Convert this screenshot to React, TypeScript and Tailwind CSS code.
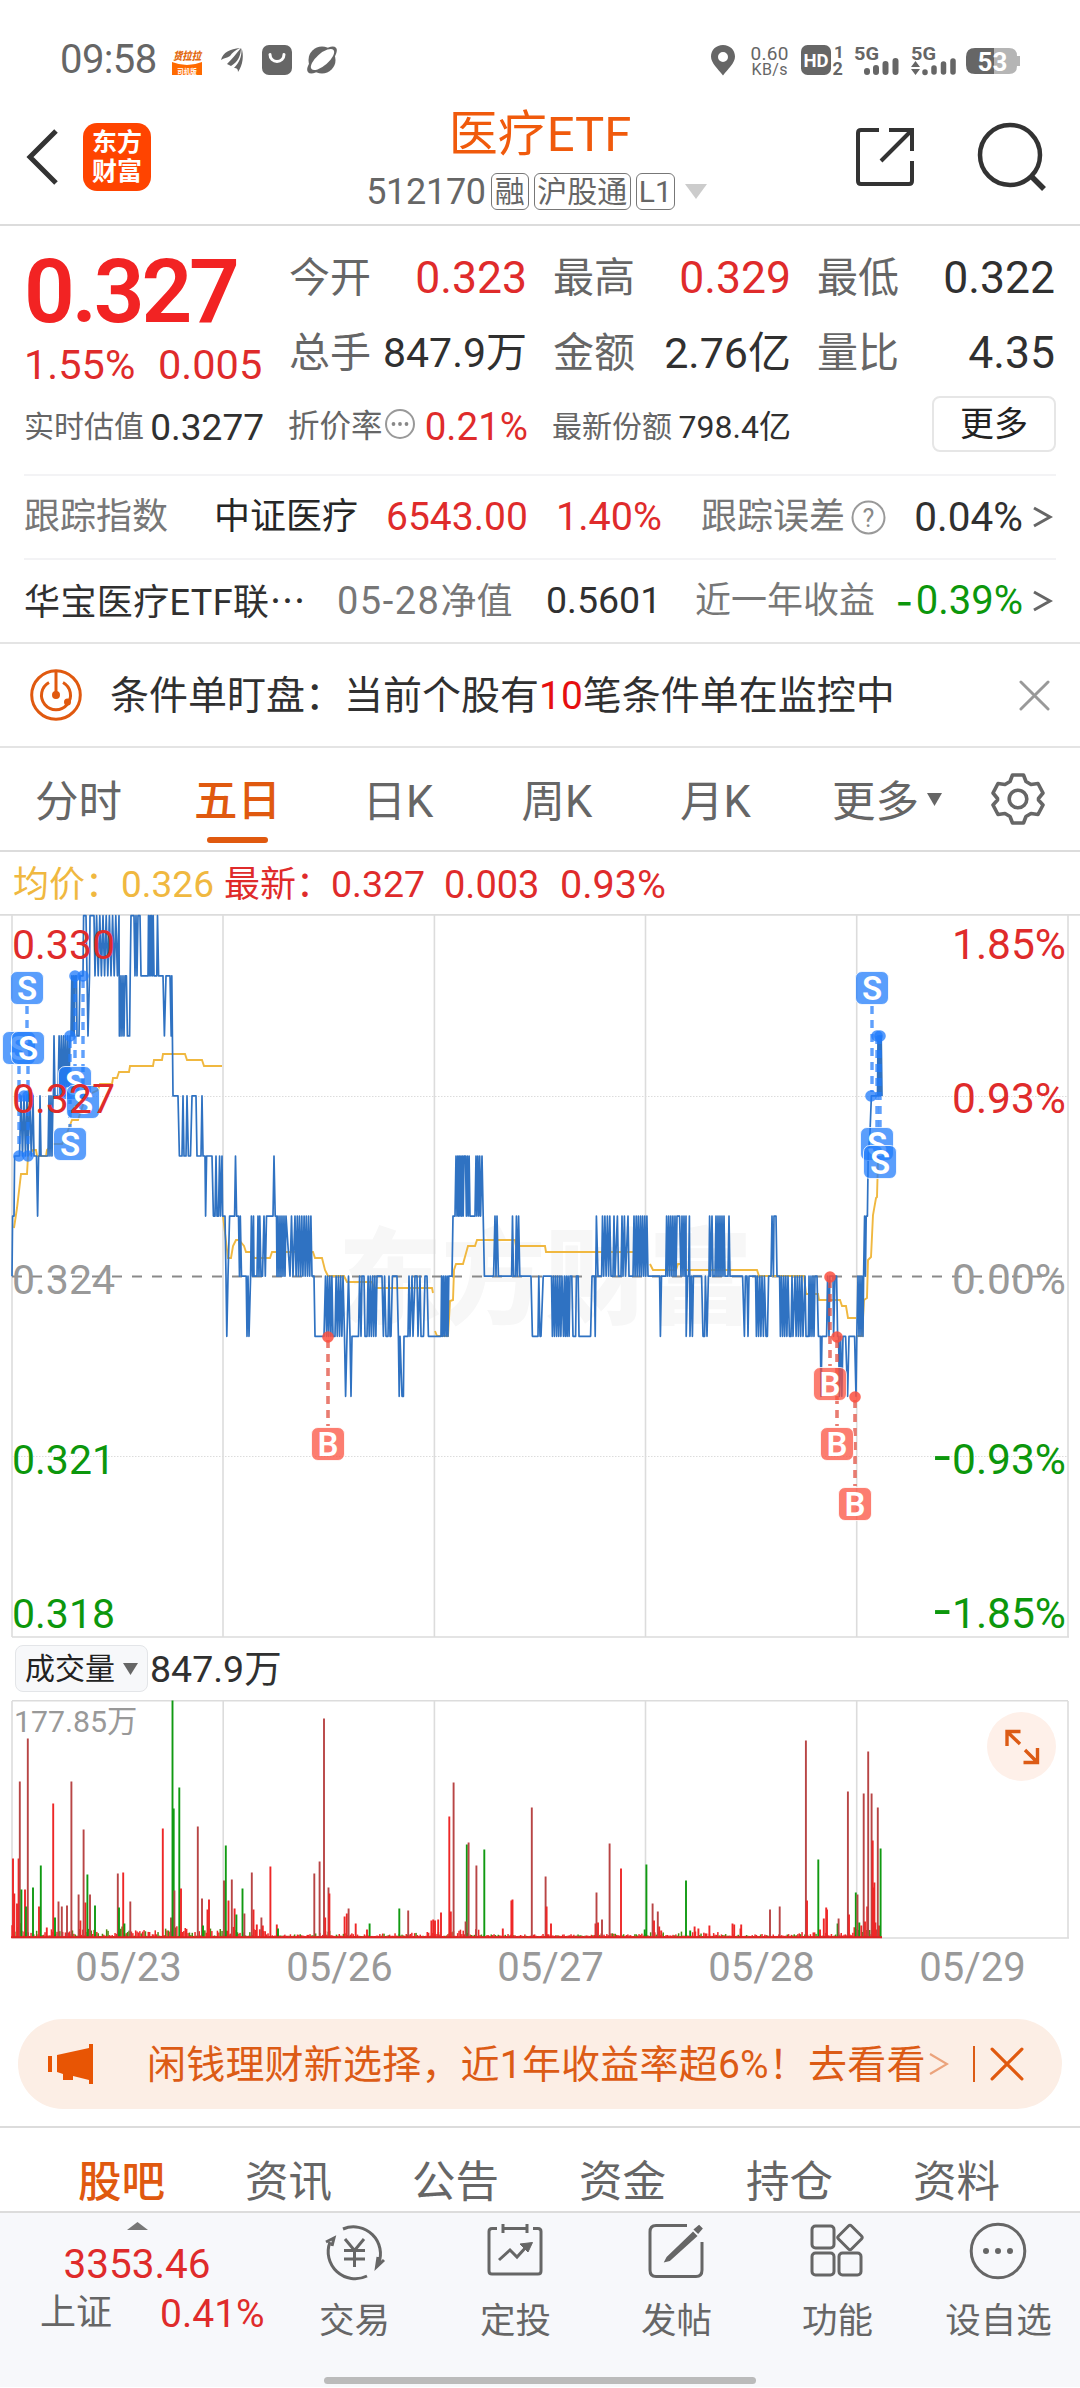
import React from "react";

/* ---------- chart geometry ---------- */

const TOP = 914;
const levelY = (l: number) => 915.7 + l * 60.08 - TOP;

type Step = [number, number] | [number, number, number, number, number];

// [x, level] is a vertex; [x0, x1, a, b, n] swings between two levels n times.
const PRICE: Step[] = [
  [12, 6], [12.6, 5], [14, 5], [14.6, 4], [19, 4], [19.5, 27, 4, 3, 3], [28, 33, 4, 3, 2], [34, 4], [36.5, 4], [37.6, 5], [38.6, 4], [39.4, 4], [40, 3], [41, 4],
  [47.5, 4], [48, 53, 4, 3, 3], [53.4, 3], [54, 2], [55, 3], [57.5, 3], [58, 70, 3, 2, 6], [70.5, 2], [71, 75, 2, 1, 3], [76.5, 1], [77, 2], [79, 2], [80, 1], [83, 1], [83.6, 0], [86, 0],
  [87, 1], [88, 2], [89.5, 1], [90, 0], [94, 0], [95, 119, 1, 0, 8], [119.4, 2], [120, 125, 2, 1, 3], [126.4, 1], [127.4, 2], [129.6, 2], [130.2, 1], [131, 0], [134, 0], [135, 138, 1, 0, 2], [140, 0], [141, 1], [148, 1],
  [148.5, 154, 0, 1, 4], [156.8, 1], [157.5, 0], [158.6, 1], [163, 1], [164.4, 2], [166, 1], [170, 1], [171.2, 2], [171.8, 1], [173, 3], [178, 3], [179.4, 4], [182, 4], [183, 3], [184, 4], [186, 4], [187, 3], [188.4, 4], [190.5, 4], [192, 3], [196, 3],
  [197, 4], [201, 4], [202, 3], [203, 4], [205, 4], [205.6, 5], [206.6, 4], [212, 4], [213.4, 5], [215, 5], [216, 4], [217, 5], [218.4, 5], [219.6, 4], [220.4, 5], [222, 4], [222.6, 5],
  [225, 5], [226, 6], [226.8, 7], [228, 6], [229.6, 5], [234.6, 5], [235.5, 4], [236.6, 5], [238.5, 5], [239.5, 6], [240.3, 5], [241.5, 6], [246.2, 6], [247, 7], [248, 6], [249, 7], [250.6, 6], [251.4, 5], [252.5, 6], [253.5, 5], [254, 6], [257, 6], [258, 5], [259, 6], [259.8, 5], [261, 6], [262.5, 6], [264, 5], [265.3, 6], [266.5, 5],
  [273, 5], [274, 4], [275.2, 5], [276.5, 5], [277, 286, 6, 5, 5], [290, 6], [291.5, 5], [293, 6], [295, 312, 5, 6, 8], [314, 6], [315, 7], [316.6, 7],
  [324, 7], [325.5, 333, 6, 7, 4], [335, 343, 7, 6, 4], [344.5, 7], [345.6, 8], [347, 7], [348.5, 6], [350, 7], [351, 8], [352, 7], [358.5, 7], [359.6, 6], [361, 7], [362, 6], [364, 6], [365, 7], [367, 377, 7, 6, 5], [382, 6], [383.4, 7], [384.6, 6], [386, 7], [388, 7], [389, 6], [390, 7], [391, 7], [392.4, 6], [397, 6], [398.4, 7],
  [399.2, 8], [400, 7], [402, 8], [403.4, 8], [404, 7], [408, 7], [409, 6], [410, 7], [412, 6], [413, 7], [415, 6], [417, 6], [418, 7], [420, 6], [421, 7], [423.5, 7], [425, 6], [427, 6], [428.4, 7],
  [441, 7], [441.6, 448, 6, 7, 4], [448.8, 6], [452, 6], [453, 5], [455, 5], [456, 4], [457, 464, 5, 4, 5], [465.5, 470, 4, 5, 3], [475, 5], [476, 480.6, 4, 5, 3], [482, 4], [483.2, 5], [484.4, 6], [493.6, 6], [495, 5], [496, 6], [497, 5], [498.4, 6], [511.6, 6], [512.5, 5], [513.5, 6], [515.5, 6], [516.4, 5], [517.4, 6], [518.6, 5], [519.8, 6],
  [531, 6], [532.4, 7], [538, 7], [538.8, 6], [540, 7], [541, 7], [543.2, 6], [551.5, 6], [552.4, 562, 7, 6, 5], [563.5, 570, 7, 6, 4], [571.8, 6], [573, 7], [575.6, 7], [576.4, 6], [578.2, 6], [579, 7], [590.6, 7], [592, 6], [594.4, 6], [595.2, 7], [595.8, 6], [596.4, 5], [598, 6],
  [601.6, 6], [602.5, 611, 5, 6, 4], [613, 6], [614, 5], [615, 6], [617.4, 5], [618.5, 6], [621, 6], [622, 5], [623, 6], [624.4, 5], [625.5, 6], [628, 5], [629, 6], [633, 6], [634, 648, 5, 6, 7],
  [659.6, 6], [660.4, 7], [661.5, 6], [665.8, 6], [666.6, 674, 5, 6, 4], [675, 5], [676, 6], [677, 5], [679.6, 5], [681, 686, 6, 5, 3], [686.2, 7], [687.6, 6], [688.6, 6], [689.4, 5], [690, 7], [691.4, 6], [692.4, 7], [693.4, 6], [701.6, 6], [703, 7], [704.6, 7], [705.4, 6], [707, 7], [708.4, 6], [709, 6], [709.6, 5], [710.6, 6], [712, 5], [713, 6],
  [715, 6], [716, 725, 5, 6, 5], [728, 6], [729, 5], [730, 6], [742.6, 6], [744.4, 7], [745.4, 6], [747, 6], [748, 7], [749, 6], [755.6, 6], [756.4, 762, 7, 6, 3], [763.4, 7], [764.4, 6], [766, 7], [767.4, 7], [768.6, 6], [771, 6], [772, 5], [773.4, 6], [774, 5], [776, 5], [777, 6], [779.6, 6],
  [780.4, 788, 7, 6, 4], [789.4, 7], [791, 7], [792, 6], [793, 7], [795, 803, 6, 7, 4], [805, 6], [806, 7], [808.4, 7], [809, 814, 6, 7, 3], [815, 6], [817, 6], [818.4, 7], [820.4, 7], [821, 8], [822, 7], [826.6, 7], [827.6, 6], [829, 7], [829.8, 6], [833, 6], [833.6, 7], [835, 6], [836.6, 6], [837.6, 7],
  [838.6, 7], [839.4, 843, 8, 7, 2], [844.6, 7], [845.6, 7], [847.6, 8], [849, 7], [854.6, 7], [856, 8], [856.8, 7], [858, 863, 6, 7, 3], [863.6, 6], [864.6, 5], [865.4, 6], [866.2, 5], [867.4, 5], [868.2, 4], [870, 3.6], [871.4, 3], [877.5, 3], [878, 882, 2, 3, 3],
];

const pricePoints = PRICE.flatMap((s): string[] => {
  if (s.length === 2) return [`${s[0]},${levelY(s[1]).toFixed(1)}`];
  const [x0, x1, a, b, n] = s;
  const d = (x1 - x0) / (n * 2 - 1);
  return Array.from({ length: n * 2 }, (_, i) => `${(x0 + i * d).toFixed(1)},${levelY(i % 2 ? b : a).toFixed(1)}`);
}).join(" ");

const AVERAGE = [
  "14,1228 17,1208 21,1174 27,1174 28,1156 33,1150 36,1150 37,1156 46,1156 47,1150 53,1144 62,1144 65,1138 72,1120 78,1120 84,1102 90,1094 98,1090 100,1084 112,1084 113,1078 117,1078 119,1072 129,1072 130,1066 153,1066 154,1060 162,1060 163,1054 185,1054 187,1060 202,1060 204,1066 222,1066",
  "223,1216 228,1258 231,1258 233,1246 236,1240 239,1240 244,1246 246,1252 251,1252 254,1258 270,1258 272,1252 313,1252 315,1258 322,1258 325,1270 328,1276 344,1276 347,1282 372,1282 374,1288 432,1288 433,1293",
  "435,1331 437,1336 448,1336 450,1301 453,1300 454,1270 456,1264 463,1264 468,1246 475,1246 477,1240 515,1240 516,1246 545,1246 546,1252 636,1252 645,1256",
  "650,1264 653,1270 676,1270 678,1264 683,1264 685,1270 757,1270 759,1276 804,1276 806,1294 818,1294 819,1300 840,1300 842,1306 846,1306 848,1318 856,1318",
  "857,1336 862,1336 864,1300 867,1298 868,1260 871,1257 873,1215 876,1198 877,1197 878,1160 880,1150",
];

const TRADES = {
  sellDots: [[75, 976], [83, 976], [70, 1036], [19, 1156], [28, 1156], [24, 1096], [28, 1096], [871, 1096], [877, 1036], [880, 1036]],
  sellLines: [[27, 1006, 1030], [19, 1066, 1150], [28, 1066, 1150], [75, 980, 1066], [83, 980, 1086], [70, 1040, 1128], [872, 1006, 1092], [877, 1036, 1128], [880, 1036, 1128]],
  sells: [[27, 988], [19, 1048], [28, 1048], [75, 1083], [83, 1102], [70, 1144], [872, 988], [877, 1144], [880, 1162]],
  buyDots: [[328, 1337], [830, 1277], [837, 1337], [855, 1397]],
  buyLines: [[328, 1340, 1426], [830, 1280, 1366], [837, 1340, 1426], [855, 1400, 1486]],
  buys: [[328, 1444], [830, 1384], [837, 1444], [855, 1504]],
};

function Tag({ x, y, label, color }: { x: number; y: number; label: string; color: string }) {
  return (
    <g>
      <rect x={x - 16.5} y={y - TOP - 16.5} width="33" height="33" rx="6.5" fill={color} fillOpacity=".74" stroke="#fff" strokeWidth=".8" />
      <text x={x} y={y - TOP + 11.8} textAnchor="middle" fontSize="33" fontWeight="600" fill="#fff">{label}</text>
    </g>
  );
}

const AXIS: [string, string, number, string][] = [
  ["0.330", "1.85%", 959, "#df2b2b"],
  ["0.327", "0.93%", 1113, "#df2b2b"],
  ["0.324", "0.00%", 1294, "#999999"],
  ["0.321", "-0.93%", 1474, "#0c970c"],
  ["0.318", "-1.85%", 1628, "#0c970c"],
];

function PriceChart() {
  const S = "#217cfb";
  const B = "#fb4f3e";
  return (
    <svg className="block w-[1080px] h-[726px] overflow-visible" viewBox="0 0 1080 726" fontFamily='Roboto, "Noto Sans CJK SC", sans-serif'>
      <text x="338" y="402" fontSize="104" fontWeight="900" fill="#f7f7f7" letterSpacing="-.5">东方财富</text>
      <g stroke="#dcdcdc" strokeWidth="1.6">
        <path d="M0 .9H1080M12 723H1069" />
        <path d="M12 1V723M223 1V723M434.4 1V723M645.5 1V723M856.7 1V723M1068 1V723" />
        <path d="M12 182.5H1068M12 542.5H1068" strokeDasharray="1.5 1.5" strokeWidth="1" />
      </g>
      <path d="M12 362.5H1066" stroke="#8a8a8a" strokeWidth="1.8" strokeDasharray="10 10" />
      <g transform={`translate(0 ${-TOP})`} fill="none" stroke="#f0b840" strokeWidth="1.9">
        {AVERAGE.map((p) => <polyline key={p} points={p} />)}
      </g>
      <polyline points={pricePoints} fill="none" stroke="#2f72c2" strokeWidth="1.7" strokeLinejoin="round" />
      <g stroke={S} strokeOpacity=".72" strokeWidth="3.4" strokeDasharray="8 6">
        {TRADES.sellLines.map(([x, a, b], i) => <path key={i} d={`M${x} ${a - TOP}V${b - TOP}`} />)}
      </g>
      <g stroke="#e04a3a" strokeOpacity=".72" strokeWidth="3.6" strokeDasharray="8 6">
        {TRADES.buyLines.map(([x, a, b], i) => <path key={i} d={`M${x} ${a - TOP}V${b - TOP}`} />)}
      </g>
      {TRADES.sellDots.map(([x, y], i) => <circle key={i} cx={x} cy={y - TOP} r="5.8" fill={S} fillOpacity=".76" />)}
      {TRADES.buyDots.map(([x, y], i) => <circle key={i} cx={x} cy={y - TOP} r="5.8" fill={B} fillOpacity=".85" />)}
      {TRADES.sells.map(([x, y], i) => <Tag key={i} x={x} y={y} label="S" color={S} />)}
      {TRADES.buys.map(([x, y], i) => <Tag key={i} x={x} y={y} label="B" color={B} />)}
      {AXIS.map(([l, r, y, c]) => (
        <g key={l} fontSize="41" fill={c}>
          <text x="12" y={y - TOP}>{l}</text>
          <text x="1066" y={y - TOP} fontSize="42.5" textAnchor="end">
            {r.startsWith("-") && <tspan fontFamily='"Noto Sans CJK SC"' fontSize="56">-</tspan>}
            {r.replace("-", "")}
          </text>
        </g>
      ))}
    </svg>
  );
}

// x, bar height, colour key: r red, d dark red, g green
const BARS_RAW =
  "13 79 r,14.3 44 r,17 34 r,18.6 79 r,19.8 156 d,21.4 48 g,25 48 r,26 31 g,27.8 199 d,33 50 g,39 31 r,40.8 72 g,46.8 10 r,53.2 134 r,55 20 g,58.5 36 d,61.8 31 d,67 32 d,71.4 156 d,78.6 43 d,80.4 17 r,83.6 108 d,85.4 35 r,87.4 63 g,90 43 d,95 32 g,117.8 64 d,119 30 g,123.2 65 r,124.4 14 g,130.3 36 d,162.8 109 r,171 20 d,172.5 237 g,173.7 129 g,174.4 47 d,179.3 150 g,181 49 r,197.8 111 d,202 39 d,203 12 g,207.5 28 r,209 38 r,224 57 d,225.8 92 g,228.5 37 r,231.8 58 d,234.6 29 r,236.4 23 g,242.5 49 g,244.4 24 d,251.8 65 d,253.5 28 r,256.8 13 r,261.4 20 d,262.8 12 r,270.4 71 r,276.8 13 r,278 9 g,314.3 64 d,319.6 76 d,324 219 d,325.2 20 r,328.5 50 d,329.4 44 r,344.6 21 r,346.8 24 r,348.6 29 d,355.7 14 r,369.6 14 g,367 8 r,399.3 29 g,408.2 27 d,431.4 17 r,433.2 18 r,435 17 r,438.2 18 r,441 25 r,449.3 121 r,450.8 26 r,453.6 155 d,466.8 93 g,468.6 95 d,465.6 16 d,476.4 72 d,484.3 88 g,502.8 9 r,511.4 37 r,512.5 38 r,531.8 130 d,545.6 61 d,546.6 31 r,551 14 r,595.5 14 r,596.5 45 d,598 15 r,602 18 d,609.6 94 d,621 69 r,644.7 8 g,646.4 73 g,652.6 34 d,654 17 r,657.8 26 d,659.2 11 r,661.2 7 r,686 57 g,690.2 7 g,694.6 11 r,698.4 9 r,709.4 12 r,732.5 14 r,734.2 13 r,740.5 9 r,741.2 13 r,770 28 d,779.7 31 d,805.9 197 d,807 37 r,818.3 78 g,820 8 r,823.8 19 r,826.2 30 r,827 28 r,837.6 14 g,838.6 19 d,847.9 146 d,849 23 r,855.8 45 g,857.5 43 d,859.3 15 g,861.3 12 r,863.7 144 d,865 16 r,867.2 31 r,868.2 186 d,871.6 144 d,872.7 97 r,873.7 50 r,874.4 55 r,875.4 15 r,876.8 8 r,877.8 130 d,879 12 r,880.6 89 g";
const COLORS: Record<string, string> = { r: "#ee2727", d: "#b84545", g: "#109a12" };
const BARS = BARS_RAW.split(",").map((s) => {
  const [x, h, c] = s.split(" ");
  return { x: +x, h: +h, fill: COLORS[c] };
});

// Low-volume minutes along the baseline; `amp` is the usual height in each stretch.
const QUIET: [number, number, number][] = [
  [12, 24, 16], [24, 50, 6], [50, 80, 7], [80, 130, 10], [130, 160, 7], [160, 222, 10], [222, 240, 10], [240, 275, 7], [275, 310, 2], [310, 335, 6],
  [335, 395, 3], [395, 430, 4], [430, 445, 5], [445, 480, 7], [480, 590, 2], [590, 645, 3], [645, 720, 5], [720, 795, 2], [795, 850, 4], [850, 882, 10],
];
const FLOOR = QUIET.flatMap(([a, b, amp]) =>
  Array.from({ length: Math.ceil((b - a) / 1.4) }, (_, i) => {
    const x = a + i * 1.4;
    const n = Math.abs(Math.sin(x * 12.9898) * 43758.5453) % 1;
    const m = Math.abs(Math.sin(x * 78.233) * 9631.17) % 1;
    return { x, h: 1.5 + n * n * amp, fill: m > 0.72 ? "#4d8a10" : "#ee2727" };
  }),
);

function VolumeChart() {
  return (
    <svg className="block w-[1080px] h-[240px]" viewBox="0 0 1080 240" fontFamily='Roboto, "Noto Sans CJK SC", sans-serif'>
      <g stroke="#dcdcdc" strokeWidth="1.6">
        <path d="M12 .8H1068M12 238H1069" />
        <path d="M12 1V238M223.2 1V238M434.4 1V238M645.5 1V238M856.7 1V238M1068 1V238" />
      </g>
      <text x="14" y="32" fontSize="30.3" fill="#999">177.85万</text>
      {FLOOR.map((b, i) => <rect key={i} x={b.x - 0.7} y={237.5 - b.h} width="1.5" height={b.h} fill={b.fill} />)}
      {BARS.map((b, i) => <rect key={i} x={b.x - 0.95} y={237.5 - b.h} width="1.9" height={b.h} fill={b.fill} />)}
      <path d="M11 237.3H882" stroke="#d22" strokeWidth="2" />
    </svg>
  );
}

/* ---------- small pieces ---------- */

function Chevron() {
  return (
    <svg className="w-[20px] h-[24px]" viewBox="0 0 20 24" fill="none" stroke="#666" strokeWidth="3"><path d="M1 3L17 12L1 21" /></svg>
  );
}

function Cross({ className, color, width }: { className: string; color: string; width: number }) {
  return (
    <svg className={className} viewBox="0 0 32 32" fill="none" stroke={color} strokeWidth={width} strokeLinecap="round"><path d="M2 2L30 30M30 2L2 30" /></svg>
  );
}

function Stat({ label, value, color = "text-[#303030]", size = "text-[44.5px]" }: { label: string; value: string; color?: string; size?: string }) {
  return (
    <div className="flex items-center justify-between h-[75px]">
      <span className="text-[41px] pt-[2px] text-[#666]">{label}</span>
      <span className={`${size} pt-[1px] ${color}`}>{value}</span>
    </div>
  );
}

const RED = "text-[#df2b2b]";

function StatusBar() {
  return (
    <div className="flex items-center h-[90px] pt-[30px] pl-[60px] pr-[59px] text-[#666]">
      <span className="text-[40px] w-[112px] tracking-[-0.6px]">09:58</span>
      <svg className="w-[170px] h-[30px] overflow-visible" viewBox="0 0 170 30">
        <text x="1" y="15" fontSize="11" fontWeight="900" fontStyle="italic" fill="#e36a10" textLength="28" lengthAdjust="spacingAndGlyphs">货拉拉</text>
        <path d="M0 17Q15 23 30 17V30H0Z" fill="#ff6a00" />
        <text x="15" y="28.5" fontSize="6.5" fontWeight="700" fill="#fff" textAnchor="middle">司机版</text>
        <g fill="#666">
          <path d="M49 15C51 7 58 4 68 3C63 5 60 8 58 11C55 13 52 13 49 15ZM55 19C60 14 64 9 69 3C69 10 66 17 59 21ZM62 23C67 18 70 12 69.500 3C72 10 71 20 66 27C66 24 65 23 62 23Z" />
          <rect x="90" width="30" height="30" rx="7" />
          <ellipse cx="150" cy="15" rx="18.500" ry="7.500" transform="rotate(-41 150 15)" />
          <circle cx="150" cy="15" r="13.500" />
        </g>
        <path d="M98 9.500A7 7 0 0 0 112 9.500" fill="none" stroke="#fff" strokeWidth="3" strokeLinecap="round" />
        <ellipse cx="150.500" cy="14.500" rx="14.500" ry="6" transform="rotate(-41 150.500 14.500)" fill="#fff" />
      </svg>
      <svg className="ml-auto w-[312px] h-[32px] overflow-visible" viewBox="709 43 312 32" fill="#666">
        <path fillRule="evenodd" d="M723 44C716 44 711 49 711 55.500C711 62 718 68 723 74.500C728 68 735 62 735 55.500C735 49 730 44 723 44ZM723 51A5 5 0 1 1 723 61A5 5 0 1 1 723 51Z" />
        <text x="750.500" y="59" fontSize="19" textLength="38">0.60</text>
        <text x="751.500" y="74" fontSize="16" textLength="36">KB/s</text>
        <rect x="801" y="44" width="30" height="30" rx="6.500" />
        <text x="816" y="65.500" fontSize="18.500" fontWeight="700" fill="#fff" textAnchor="middle">HD</text>
        <text x="834" y="57" fontSize="17" fontWeight="700">1</text>
        <text x="832.500" y="74" fontSize="18" fontWeight="700">2</text>
        <text x="854" y="59" fontSize="19" fontWeight="700" textLength="25" lengthAdjust="spacingAndGlyphs">5G</text>
        <path d="M867 70V71M876 67V71M885.500 63V71M895.500 60V71" stroke="#666" strokeWidth="6" strokeLinecap="round" />
        <text x="911" y="59" fontSize="19" fontWeight="700" textLength="25" lengthAdjust="spacingAndGlyphs">5G</text>
        <path d="M915.500 60L920 66H911ZM915.500 74L920 68H911Z" />
        <path d="M925 71V71.500M934 67V71M943.500 63V71M953 60V71" stroke="#666" strokeWidth="5.500" strokeLinecap="round" />
        <path d="M975 47H1009Q1017 47 1017 55H1020V65H1017Q1017 73 1009 73H975Z" fill="#b5b5b5" />
        <path d="M994 47H975Q966 47 966 56V64Q966 73 975 73H994Z" />
        <text x="992.500" y="69.500" fontSize="26" fontWeight="700" fill="#fff" textAnchor="middle">53</text>
      </svg>
    </div>
  );
}

function Header() {
  return (
    <div className="flex items-center justify-between h-[136px] pl-[26px] pr-[33px] border-b-2 border-[#dcdcdc]">
      <div className="flex items-center w-[300px]">
        <svg className="w-[34px] h-[56px]" viewBox="0 0 34 56" fill="none" stroke="#333" strokeWidth="5"><path d="M30 2L4 28L30 54" /></svg>
        <div className="ml-[23px] w-[68px] h-[68px] rounded-[14px] bg-[#ff4400] flex flex-col items-center justify-center text-white font-bold text-[25px] leading-[29px]">
          <span>东方</span>
          <span>财富</span>
        </div>
      </div>
      <div className="flex flex-col items-center -ml-[16px]">
        <div className="text-[49px] text-[#f05a0c] h-[60px] flex items-center mt-[6px] pl-[7px]">医疗ETF</div>
        <div className="flex items-center text-[#666] h-[48px] mt-[3px] text-[36px]">
          <span className="tracking-[-0.3px]">512170</span>
          <span className="ml-[5px] border-[1.5px] border-[#777] rounded-[6px] h-[37px] w-[38px] flex items-center justify-center text-[30px]">融</span>
          <span className="ml-[5px] border-[1.5px] border-[#777] rounded-[6px] h-[37px] w-[97px] flex items-center justify-center text-[30px]">沪股通</span>
          <span className="ml-[5px] border-[1.5px] border-[#777] rounded-[6px] h-[37px] w-[39px] flex items-center justify-center text-[30px]">L1</span>
          <svg className="ml-[10px] w-[22px] h-[15px]" viewBox="0 0 22 15"><path d="M0 0H22L11 15Z" fill="#ccc" /></svg>
        </div>
      </div>
      <div className="flex items-center justify-end w-[284px]">
        <svg className="w-[60px] h-[60px]" viewBox="0 0 60 60" fill="none" stroke="#333" strokeWidth="4">
          <path d="M24 3H6Q3 3 3 6V54Q3 57 6 57H54Q57 57 57 54V34M34 3H57V24M57 3L26 34" />
        </svg>
        <svg className="ml-[62px] w-[70px] h-[70px]" viewBox="0 0 70 70" fill="none" stroke="#333" strokeWidth="4.500">
          <circle cx="33" cy="33" r="30" /><path d="M54 54L67 67" strokeWidth="5.500" />
        </svg>
      </div>
    </div>
  );
}

function Quote() {
  return (
    <div className="pt-[14px] h-[248px]">
      <div className="flex h-[150px] pl-[24px] pr-[25px]">
        <div className="w-[265px]">
          <div className="h-[98px] pt-[5px] flex items-center text-[89px] font-semibold text-[#f22323] tracking-[-3.2px]">0.327</div>
          <div className={`h-[52px] pt-[2px] flex items-center text-[41.500px] ${RED}`}>
            <span className="w-[134px]">1.55%</span>
            <span>0.005</span>
          </div>
        </div>
        <div className="flex-1 grid grid-cols-3 gap-x-[26px]">
          <Stat label="今开" value="0.323" color={RED} />
          <Stat label="最高" value="0.329" color={RED} />
          <Stat label="最低" value="0.322" />
          <Stat label="总手" value="847.9万" size="text-[41px]" />
          <Stat label="金额" value="2.76亿" size="text-[43px]" />
          <Stat label="量比" value="4.35" />
        </div>
      </div>
      <div className="flex items-center h-[74px] pl-[24px] pr-[24px] text-[30px] text-[#666]">
        <div className="flex items-center justify-between w-[240px]">
          <span>实时估值</span><span className="text-[37px] text-[#303030]">0.3277</span>
        </div>
        <div className="ml-[24px] flex items-center w-[240px]">
          <span className="text-[31.5px]">折价率</span>
          <svg className="ml-[1px] mb-[6px] w-[32px] h-[32px]" viewBox="0 0 32 32">
            <circle cx="16" cy="16" r="14" fill="none" stroke="#999" strokeWidth="2" />
            <g fill="#888"><circle cx="9.500" cy="16" r="1.900" /><circle cx="16" cy="16" r="1.900" /><circle cx="22.500" cy="16" r="1.900" /></g>
          </svg>
          <span className={`ml-auto text-[38.500px] ${RED}`}>0.21%</span>
        </div>
        <div className="ml-[24px] flex items-center justify-between w-[239px]">
          <span>最新份额</span><span className="text-[32px] text-[#303030]">798.4亿</span>
        </div>
        <div className="ml-auto w-[124px] h-[56px] mb-[6px] rounded-[8px] border-2 border-[#e6e6e6] flex items-center justify-center text-[34px] text-[#222]">更多</div>
      </div>
    </div>
  );
}

function FundRows() {
  return (
    <div className="px-[24px]">
      <div className="h-[84px] border-t-2 border-[#f3f3f5] flex items-center text-[36px] text-[#777]">
        <span className="w-[190px]">跟踪指数</span>
        <span className="w-[172px] text-[#262626]">中证医疗</span>
        <span className={`w-[170px] text-[39px] ${RED}`}>6543.00</span>
        <span className={`w-[145px] text-[39.500px] ${RED}`}>1.40%</span>
        <span>跟踪误差</span>
        <svg className="ml-[6px] w-[35px] h-[35px]" viewBox="0 0 35 35">
          <circle cx="17.500" cy="17.500" r="16" fill="none" stroke="#999" strokeWidth="2" />
          <text x="17.500" y="26.500" textAnchor="middle" fontSize="25" fill="#888">?</text>
        </svg>
        <span className="ml-auto text-[40.500px] text-[#303030]">0.04%</span>
        <span className="ml-[10px] mr-[3px]"><Chevron /></span>
      </div>
      <div className="h-[84px] border-t-2 border-[#f3f3f5] flex items-center text-[36px] text-[#777]">
        <span className="w-[313px] text-[#303030] tracking-[0.4px]">华宝医疗ETF联<span className="font-['Noto_Sans_CJK_SC']">⋯</span></span>
        <span className="w-[209px]"><span className="text-[38px] tracking-[1.5px]">05-28</span>净值</span>
        <span className="w-[149px] text-[37.500px] text-[#303030]">0.5601</span>
        <span>近一年收益</span>
        <span className="ml-auto flex items-center h-[40px] text-[40px] text-[#0c970c]">
          <span className="mr-[3px] mb-[10px] text-[48px] font-['Noto_Sans_CJK_SC']">-</span>0.39%
        </span>
        <span className="ml-[10px] mr-[3px]"><Chevron /></span>
      </div>
    </div>
  );
}

function Notice() {
  return (
    <div className="h-[106px] border-t-2 border-b-2 border-[#e4e4e4] flex items-center pl-[30px] pr-[30px]">
      <svg className="w-[52px] h-[52px]" viewBox="0 0 52 52" fill="none" stroke="#e0590f" strokeWidth="3">
        <circle cx="26" cy="26" r="24.300" />
        <path d="M19 13.500A14.500 14.500 0 1 0 33 13.500" />
        <path d="M26 3V26" />
        <circle cx="26" cy="26" r="2.500" fill="#e0590f" />
        <circle cx="37.500" cy="33" r="2" fill="#e0590f" />
      </svg>
      <span className="ml-[28px] pt-[2px] text-[39px] text-[#303030]">条件单盯盘：当前个股有<span className="text-[#e60f0f]">10</span>笔条件单在监控中</span>
      <Cross className="ml-auto w-[31px] h-[31px]" color="#999" width={3} />
    </div>
  );
}

function PeriodTabs() {
  return (
    <div className="h-[104px] border-b-2 border-[#dcdcdc] flex items-center text-[43.500px] text-[#666]">
      <span className="w-[157px] pt-[7px] text-center">分时</span>
      <span className="w-[161px] h-full flex flex-col items-center text-[#e0590f] font-medium">
        <span className="h-[89px] pt-[19px] flex items-center">五日</span>
        <span className="w-[61px] h-[6px] rounded-full bg-[#e0590f]" />
      </span>
      <span className="w-[160px] pt-[7px] text-center">日K</span>
      <span className="w-[158px] pt-[7px] text-center">周K</span>
      <span className="w-[159px] pt-[7px] text-center">月K</span>
      <span className="w-[162px] pt-[7px] pl-[37px] flex items-center">更多
        <svg className="ml-[8px] mb-[6px] w-[15px] h-[13px] shrink-0" viewBox="0 0 15 13"><path d="M0 0H15L7.500 13Z" fill="#666" /></svg>
      </span>
      <svg className="ml-[34px] w-[54px] h-[54px]" viewBox="0 0 54 54" fill="none" stroke="#666" strokeWidth="3.600" strokeLinejoin="round">
        <path d="M21.500 3H32.500L35 9.500L40 12.500L47 11.500L52 21L47.500 26.500V28L52 33L47 42.500L40 41.500L35 44.500L32.500 51H21.500L19 44.500L14 41.500L7 42.500L2 33L6.500 28V26.500L2 21L7 11.500L14 12.500L19 9.500Z" />
        <circle cx="27" cy="27" r="8.800" />
      </svg>
    </div>
  );
}

function Legend() {
  return (
    <div className="h-[62px] pt-[3px] flex items-center pl-[13px] text-[36px]">
      <span className="text-[#f0b840] w-[211px]">均价：<span className="text-[37px]">0.326</span></span>
      <span className={`${RED} w-[107px]`}>最新：</span>
      <span className={`${RED} w-[113px] text-[37.500px]`}>0.327</span>
      <span className={`${RED} w-[116px] text-[38px]`}>0.003</span>
      <span className={`${RED} text-[39.500px]`}>0.93%</span>
    </div>
  );
}

const NAV: [string, React.ReactNode][] = [
  ["交易", <>
    <path d="M20 7A27 27 0 0 1 55.500 42M44 54A27 27 0 0 1 7 20M3 20L11 16L9 24M61 38L53.500 45L55 35" />
    <path d="M22 17L31.500 28.500L41 17M31.500 28V45M21 28.500H42M21 37H42" />
  </>],
  ["定投", <>
    <path d="M13 6.500H8Q5 6.500 5 9.500V49Q5 52 8 52H54Q57 52 57 49V9.500Q57 6.500 54 6.500H49M19 2V11M43 2V11M19 6.500H43" />
    <path d="M15 38L26 28L33 35L43 24" /><path d="M36 22L48.500 20.500L44 30Z" fill="#666" strokeWidth="1" />
  </>],
  ["发帖", <>
    <path d="M42 3.500H11Q5 3.500 5 10V48Q5 54.500 11 54.500H51Q57 54.500 57 48V20" />
    <path d="M48 12L23 36L22 38L24 37.500L50 14ZM51 7.500L54 5L55.500 6.500L53 9.500Z" fill="#666" strokeWidth="3.500" />
  </>],
  ["功能", <>
    <rect x="6" y="4" width="22" height="22" rx="3.500" /><rect x="6" y="31" width="22" height="22" rx="3.500" /><rect x="33" y="31" width="22" height="22" rx="3.500" />
    <path d="M42.500 4Q44 2.500 45.500 4L55.500 14Q57 15.500 55.500 17L45.500 27Q44 28.500 42.500 27L32.500 17Q31 15.500 32.500 14Z" />
  </>],
  ["设自选", <>
    <circle cx="31" cy="29" r="26.800" />
    <g fill="#666" stroke="none"><circle cx="19" cy="29" r="3" /><circle cx="31" cy="29" r="3" /><circle cx="43" cy="29" r="3" /></g>
  </>],
];

function BottomBar() {
  return (
    <div className="h-[176px] bg-[#f7f8fb] border-t-2 border-[#dcdcdc]">
      <div className="flex h-[160px]">
        <div className="w-[274px] flex flex-col items-center text-[#666] pt-[9px]">
          <svg className="w-[21px] h-[8px]" viewBox="0 0 21 8"><path d="M10.500 0L21 8H0Z" fill="#777" /></svg>
          <span className={`mt-[12px] h-[44px] flex items-center text-[40.500px] ${RED}`}>3353.46</span>
          <div className="flex items-center h-[54px] pl-[34px] w-full">
            <span className="text-[36px] ml-[6px]">上证</span>
            <span className={`mt-[2px] ml-[48px] text-[39px] ${RED}`}>0.41%</span>
          </div>
        </div>
        {NAV.map(([label, icon]) => (
          <div key={label} className="w-[161px] flex flex-col items-center text-[#666] pt-[9px]">
            <svg className="w-[64px] h-[60px]" viewBox="0 0 64 60" fill="none" stroke="#666" strokeWidth="3">{icon}</svg>
            <span className="mt-[22px] text-[35.500px]">{label}</span>
          </div>
        ))}
      </div>
      <div className="mx-auto mt-[4px] w-[432px] h-[7px] rounded-full bg-[#bbb]" />
    </div>
  );
}

export default function App() {
  return (
    <div className="w-[1080px] h-[2388px] overflow-hidden bg-white leading-none whitespace-nowrap font-[Roboto,'Noto_Sans_CJK_SC',sans-serif]">
      <StatusBar />
      <Header />
      <Quote />
      <FundRows />
      <Notice />
      <PeriodTabs />
      <Legend />
      <PriceChart />
      <div className="flex items-center h-[60px] pl-[15px]">
        <div className="w-[133px] h-[47px] mt-[-3px] rounded-[8px] border border-[#e3e5e8] bg-[#f7f8fa] flex items-center pl-[9px] text-[30px] text-[#222]">
          成交量
          <svg className="ml-[8px] w-[15px] h-[12px]" viewBox="0 0 15 12"><path d="M0 0H15L7.500 12Z" fill="#666" /></svg>
        </div>
        <span className="ml-[2px] text-[37.500px] text-[#303030]">847.9万</span>
      </div>
      <div className="relative">
        <VolumeChart />
        <div className="absolute right-[24px] top-[12px] w-[69px] h-[69px] rounded-full bg-[#fef0e9] flex items-center justify-center">
          <svg className="w-[36px] h-[36px]" viewBox="0 0 36 36" fill="none" stroke="#dc5b15" strokeWidth="3.400">
            <path d="M16.500 2.500H3V17M3.500 3L16 15M19.500 33.500H33.500V19M33 33L21 21" />
          </svg>
        </div>
      </div>
      <div className="flex h-[79px] pt-[8px] pl-[23px] text-[40px] text-[#999]">
        {["05/23", "05/26", "05/27", "05/28", "05/29"].map((d) => (
          <span key={d} className="w-[211px] text-center">{d}</span>
        ))}
      </div>
      <div className="mx-[18px] h-[90px] rounded-full bg-[#fceee5] flex items-center text-[39px] text-[#dc5b15]">
        <svg className="ml-[30px] w-[46px] h-[40px]" viewBox="0 0 46 40" fill="#e85504">
          <path d="M0 12H4V28H0ZM9 11L41 4V0H45V40H41V36L25 32V36H15V30L9 28Z" />
        </svg>
        <span className="ml-[53px] pt-[2px] tracking-[0.2px]">闲钱理财新选择，近1年收益率超6%！去看看</span>
        <svg className="ml-[3px] w-[20px] h-[24px]" viewBox="0 0 20 24" fill="none" stroke="#eba37c" strokeWidth="2.200"><path d="M1 2L18 12L1 22" /></svg>
        <span className="ml-auto w-[2px] h-[36px] bg-[#dc5b15]" />
        <Cross className="ml-[15px] mr-[38px] w-[34px] h-[34px]" color="#e0590f" width={3} />
      </div>
      <div className="mt-[17px] h-[85px] border-t-2 border-[#dcdcdc] flex items-center px-[38px] pt-[26px] text-[43.500px] text-[#666]">
        {["股吧", "资讯", "公告", "资金", "持仓", "资料"].map((t, i) => (
          <span key={t} className={i === 0 ? "w-[167px] text-center text-[#e0590f] font-medium" : "w-[167px] text-center"}>{t}</span>
        ))}
      </div>
      <BottomBar />
    </div>
  );
}
